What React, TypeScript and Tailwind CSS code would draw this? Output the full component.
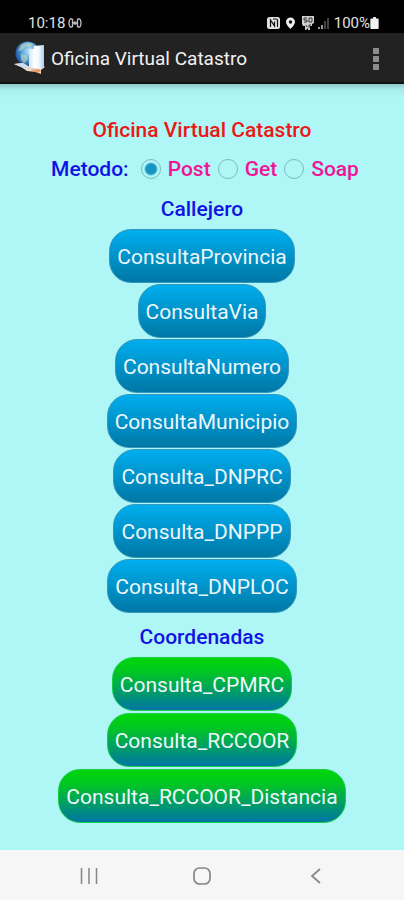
import { useState } from "react";

const callejero = [
  "ConsultaProvincia",
  "ConsultaVia",
  "ConsultaNumero",
  "ConsultaMunicipio",
  "Consulta_DNPRC",
  "Consulta_DNPPP",
  "Consulta_DNPLOC",
];
const coordenadas = ["Consulta_CPMRC", "Consulta_RCCOOR", "Consulta_RCCOOR_Distancia"];
const metodos = ["Post", "Get", "Soap"];

function StatusBar() {
  return (
    <div className="flex h-[33px] items-end justify-between bg-black pr-[25px] pl-7 text-[#e2e2e2]">
      <div className="flex h-5 items-center gap-[3px]">
        <span className="text-[15px] leading-5">10:18</span>
        <svg className="h-[10px] w-[14px]" viewBox="0 0 14 10" fill="none" stroke="#bdbdbd" strokeWidth="1.300">
          <path d="M2 1Q0 5 2 9M12 1Q14 5 12 9M4.500 1v8M9.500 1v8M2 1h2.500M2 9h2.500M9.500 1H12M9.500 9H12M5 5h4" />
          <circle cx="7" cy="5" r="1.200" />
        </svg>
      </div>
      <div className="flex h-5 items-center">
        <svg className="h-[14px] w-[62px]" viewBox="0 0 62 14">
          <rect x="0" y="1" width="13" height="12" rx="2.500" fill="#e2e2e2" />
          <path d="M3.500 11V4l4 6V5.500M6 3h3q1.500 0 1.500 1.500V11" fill="none" stroke="#111" strokeWidth="1.200" />
          <path d="M23.500 1.500a4.500 4.500 0 0 0-4.500 4.500c0 3 4.500 7 4.500 7s4.500-4 4.500-7a4.500 4.500 0 0 0-4.500-4.500z" fill="#ededed" />
          <circle cx="23.500" cy="6" r="1.700" fill="#111" />
          <path d="M35 0h12v7l-2 1v2h-2v4h-2v-2l-2 2h-1v-4h-2l-1-2z" fill="#d0d0d0" />
          <path d="M40 2h-3v2h3v2h-3M42 2h3v4h-3zM39 9l1 2M42 12V9h2" fill="none" stroke="#333" />
          <path d="M51 13v-2h2v2zM54 13V9h2v4z" fill="#999" />
          <path d="M57 13V5h2v8zM60 13V2h2v11z" fill="#444" />
        </svg>
        <span className="ml-[5px] text-[15px] leading-5">100%</span>
        <svg className="h-[12px] w-[9px]" viewBox="0 0 9 13" fill="#f0f0f0">
          <path d="M3 0h3v1.500h2q1 0 1 1V12q0 1-1 1H1q-1 0-1-1V2.500q0-1 1-1h2z" />
        </svg>
      </div>
    </div>
  );
}

function AppLogo() {
  return (
    <svg className="h-[34px] w-[34px]" viewBox="0 0 34 34" aria-hidden="true">
      <defs>
        <radialGradient id="globe" cx="0.6" cy="0.4" r="0.7">
          <stop offset="0" stopColor="#c6ebf5" />
          <stop offset="0.45" stopColor="#5fa9dc" />
          <stop offset="1" stopColor="#0c3f91" />
        </radialGradient>
        <linearGradient id="page" x1="0" x2="1">
          <stop offset="0" stopColor="#cfe4f5" />
          <stop offset="0.35" stopColor="#ffffff" />
          <stop offset="0.65" stopColor="#f2f8ff" />
          <stop offset="1" stopColor="#a9cdf0" />
        </linearGradient>
      </defs>
      <circle cx="14.500" cy="12.500" r="12" fill="url(#globe)" />
      <path d="M8 4q5-4 12-1l-4 3-3-1-4 4-4 1zM8 13l5 1 2 4-4 5-3-4z" fill="#d9eeb9" opacity="0.5" />
      <path d="M1 23l8-1 8 4 12-2 3 2-4 3v4l-5-2-9-1-6-4z" fill="#f3d6bf" />
      <path d="M1 23l9-1 7 4-2 2-7-2z" fill="#cfdcec" />
      <path d="M18 29l8-1 2 2-2 1v1l-4-1z" fill="#e59a6c" />
      <path d="M16 8h5V5l10-1v22l-5 2-10-2z" fill="url(#page)" />
    </svg>
  );
}

function ActionButton({ label, green }: { label: string; green?: boolean }) {
  return (
    <button
      type="button"
      className={
        "h-[54px] rounded-[22px] border px-[7px] pt-[2px] text-[21px] leading-7 text-[#eef7fb] " +
        (green
          ? "border-[#16cf45] bg-[linear-gradient(#00d60b,#00c820_25%,#0076a5)]"
          : "border-[#3697bb] bg-[linear-gradient(#00aeef,#0078a5)]")
      }
    >
      {label}
    </button>
  );
}

export default function App() {
  const [metodo, setMetodo] = useState("Post");
  return (
    <div className="flex min-h-screen flex-col bg-[#aff6f6] font-['Roboto',sans-serif]">
      <StatusBar />
      <header className="flex h-[51px] items-center border-b-2 border-[#111] bg-[#222] pr-[22px] pl-[13px]">
        <AppLogo />
        <h1 className="ml-1 pt-[3px] text-[19px] leading-6 text-[#f1f1f1]">Oficina Virtual Catastro</h1>
        <button type="button" aria-label="Más opciones" className="ml-auto flex h-10 w-3 flex-col items-center justify-center gap-[2px] pt-[3px]">
          <span className="h-[6px] w-[6px] bg-[#8d8d8d]" />
          <span className="h-[6px] w-[6px] bg-[#8d8d8d]" />
          <span className="h-[6px] w-[6px] bg-[#8d8d8d]" />
        </button>
      </header>
      <main className="flex flex-1 flex-col items-center bg-[linear-gradient(#8fcaca,#a9efef_6px,#aff6f6_14px)] pt-8 text-[21px] leading-7 font-medium">
        <h2 className="text-[#ec1717]">Oficina Virtual Catastro</h2>
        <div role="radiogroup" aria-labelledby="metodo-label" className="mt-[11px] flex items-center pl-[6px]">
          <span id="metodo-label" className="mr-[5px] text-[#1212e4]">
            Metodo:
          </span>
          {metodos.map((m) => (
            <label key={m} className="ml-[7px] flex items-center gap-[7px] text-[#f01596]">
              <input
                type="radio"
                name="metodo"
                value={m}
                checked={metodo === m}
                onChange={() => setMetodo(m)}
                className="h-5 w-5 appearance-none rounded-full border border-[#7fb8bb] checked:bg-[radial-gradient(circle,#1694c4_5px,#aff6f6_7px)]"
              />
              {m}
            </label>
          ))}
        </div>
        <h3 className="mt-3 text-[#1212e4]">Callejero</h3>
        <div className="mt-[6px] flex flex-col items-center gap-px font-normal">
          {callejero.map((label) => (
            <ActionButton key={label} label={label} />
          ))}
        </div>
        <h3 className="mt-[10px] text-[#1212e4]">Coordenadas</h3>
        <div className="mt-[6px] mb-6 flex flex-col items-center gap-[2px] font-normal">
          {coordenadas.map((label) => (
            <ActionButton key={label} label={label} green />
          ))}
        </div>
      </main>
      <nav className="grid h-[50px] grid-cols-3 items-center bg-[#f6f6f6] px-8 pt-[2px] text-[#858585]">
        <button type="button" aria-label="Recientes" className="flex justify-center">
          <svg className="h-5 w-5" viewBox="0 0 20 20" fill="none" stroke="currentColor" strokeWidth="1.500">
            <path d="M2.500 2v16M10 2v16M17.500 2v16" />
          </svg>
        </button>
        <button type="button" aria-label="Inicio" className="flex justify-center">
          <svg className="h-5 w-5" viewBox="0 0 20 20" fill="none" stroke="currentColor" strokeWidth="1.700">
            <rect x="2" y="2" width="16" height="16" rx="5.500" />
          </svg>
        </button>
        <button type="button" aria-label="Atrás" className="flex justify-center">
          <svg className="h-5 w-5" viewBox="0 0 20 20" fill="none" stroke="currentColor" strokeWidth="1.700">
            <path d="M15 3l-8 7 8 7" />
          </svg>
        </button>
      </nav>
    </div>
  );
}
